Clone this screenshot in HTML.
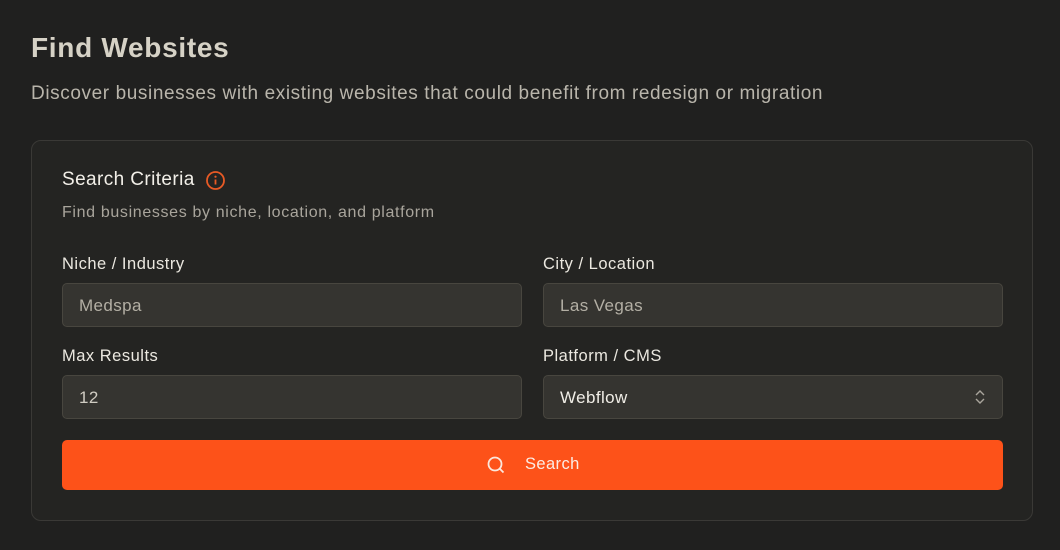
<!DOCTYPE html><html><head><style>
body{margin:0;width:1060px;height:550px;background:#20201f;font-family:"Liberation Sans",sans-serif;position:relative;overflow:hidden}
.a{position:absolute;white-space:nowrap}
.in{position:absolute;height:42px;border:1px solid #48463f;border-radius:5px;background:#353430;box-sizing:content-box;width:458px}
.in span{position:absolute;left:16px;top:12px;font-size:17px;letter-spacing:0.4px}
.lb{position:absolute;font-size:16.5px;color:#ebe8e0;letter-spacing:0.5px}
</style></head><body>
<div class="a" style="left:31px;top:32px;font-size:28px;font-weight:bold;color:#d6d2c6;letter-spacing:0.7px">Find Websites</div>
<div class="a" style="left:31px;top:83px;font-size:19px;color:#b9b5ab;letter-spacing:0.6px">Discover businesses with existing websites that could benefit from redesign or migration</div>
<div class="a" style="left:31px;top:140px;width:1000px;height:379px;border:1px solid #3a3936;border-radius:10px;background:#242422"></div>
<div class="a" style="left:62px;top:169px;font-size:19px;color:#f2efe8;letter-spacing:0.4px">Search Criteria</div>
<svg class="a" style="left:205px;top:170px" width="21" height="21" viewBox="0 0 21 21"><circle cx="10.5" cy="10.5" r="8.5" fill="none" stroke="#e85a25" stroke-width="1.8"/><line x1="10.5" y1="9.5" x2="10.5" y2="14.5" stroke="#e85a25" stroke-width="1.8"/><circle cx="10.5" cy="6.7" r="1.1" fill="#e85a25"/></svg>
<div class="a" style="left:62px;top:204px;font-size:16px;color:#a9a59c;letter-spacing:0.65px">Find businesses by niche, location, and platform</div>
<div class="lb" style="left:62px;top:255px">Niche / Industry</div>
<div class="lb" style="left:543px;top:255px">City / Location</div>
<div class="in" style="left:62px;top:283px"><span style="color:#b3afa4">Medspa</span></div>
<div class="in" style="left:543px;top:283px"><span style="color:#b3afa4">Las Vegas</span></div>
<div class="lb" style="left:62px;top:347px">Max Results</div>
<div class="lb" style="left:543px;top:347px">Platform / CMS</div>
<div class="in" style="left:62px;top:375px"><span style="color:#d0ccc2">12</span></div>
<div class="in" style="left:543px;top:375px"><span style="color:#f0ede6">Webflow</span>
<svg style="position:absolute;right:16px;top:13px" width="12" height="16" viewBox="0 0 12 16"><path d="M2 6 L6 2 L10 6 M2 10 L6 14 L10 10" fill="none" stroke="#a9a59c" stroke-width="1.4"/></svg></div>
<div class="a" style="left:62px;top:440px;width:941px;height:50px;background:#fd5219;border-radius:5px"></div>
<svg class="a" style="left:485px;top:454px" width="22" height="22" viewBox="0 0 22 22"><circle cx="10" cy="10" r="6.5" fill="none" stroke="#fbe7dd" stroke-width="1.8"/><line x1="14.8" y1="14.8" x2="18.5" y2="18.5" stroke="#fbe7dd" stroke-width="1.8"/></svg>
<div class="a" style="left:525px;top:455px;font-size:16.5px;color:#fbece4;letter-spacing:0.4px">Search</div>
</body></html>
